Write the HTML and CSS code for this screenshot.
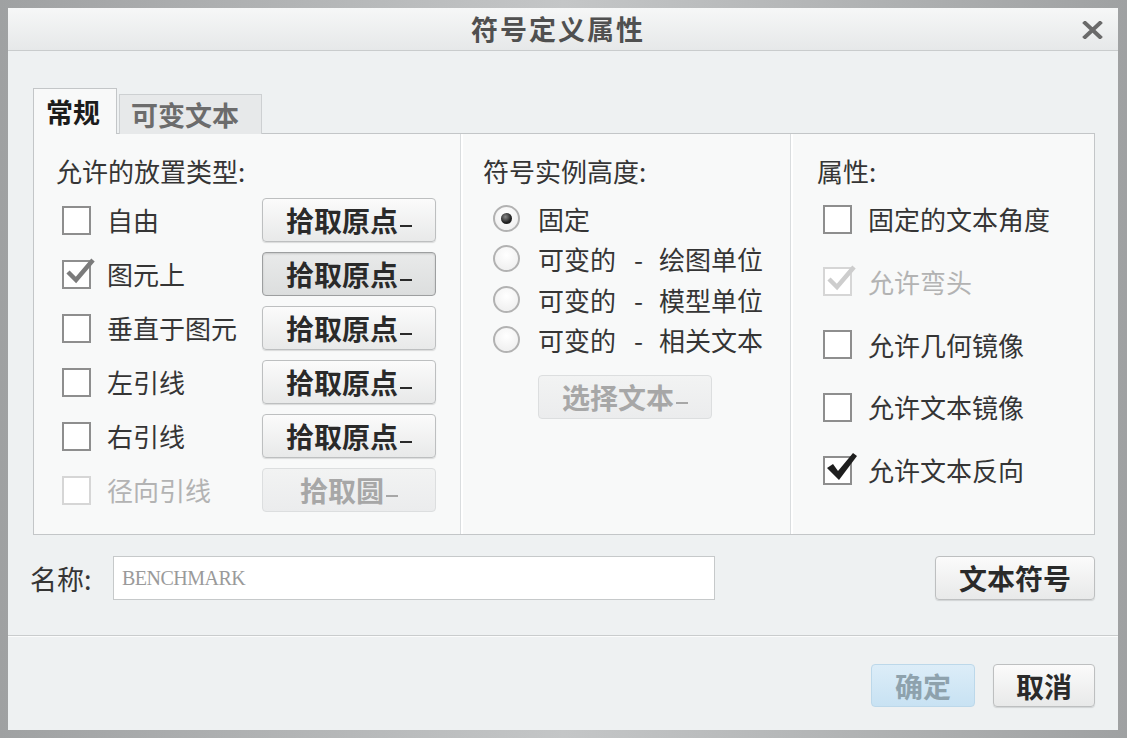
FILE: index.html
```html
<!DOCTYPE html>
<html lang="zh-CN">
  <head>
    <meta charset="UTF-8" />
    <title>符号定义属性</title>
    <link rel="stylesheet" href="styles.css">
  </head>
  <body>
    <div class="window">
      <div class="titlebar">
        <span class="title">符号定义属性</span>
        <span class="close">
          <svg width="21" height="18" viewBox="0 0 21 18">
            <path d="M3 2 L18 16 M18 2 L3 16" stroke="#6a6a6a" stroke-width="4" stroke-linecap="square" />
          </svg>
        </span>
      </div>

      <div class="content">
        <div class="tabs">
          <div class="tab active">常规</div>
          <div class="tab">可变文本</div>
        </div>

        <div class="panel">
          <!-- 放置类型 -->
          <div class="col col-place">
            <div class="group-label">允许的放置类型:</div>
            <div class="place-rows">
              <div class="place-row">
                <label class="check"><span class="box"></span>自由</label>
                <button class="btn">拾取原点<span class="mn"></span></button>
              </div>
              <div class="place-row">
                <label class="check">
                  <span class="box">
                    <svg class="tick gray" viewBox="0 0 34 34"><path d="M5 17 L13 25 L30 5" /></svg>
                  </span>图元上
                </label>
                <button class="btn pressed">拾取原点<span class="mn"></span></button>
              </div>
              <div class="place-row">
                <label class="check"><span class="box"></span>垂直于图元</label>
                <button class="btn">拾取原点<span class="mn"></span></button>
              </div>
              <div class="place-row">
                <label class="check"><span class="box"></span>左引线</label>
                <button class="btn">拾取原点<span class="mn"></span></button>
              </div>
              <div class="place-row">
                <label class="check"><span class="box"></span>右引线</label>
                <button class="btn">拾取原点<span class="mn"></span></button>
              </div>
              <div class="place-row">
                <label class="check disabled"><span class="box"></span>径向引线</label>
                <button class="btn disabled">拾取圆<span class="mn"></span></button>
              </div>
            </div>
          </div>

          <!-- 实例高度 -->
          <div class="col col-height">
            <div class="group-label">符号实例高度:</div>
            <div class="radio-rows">
              <label class="radio"><span class="dot on"></span>固定</label>
              <label class="radio"><span class="dot"></span>可变的<span class="dash">-</span>绘图单位</label>
              <label class="radio"><span class="dot"></span>可变的<span class="dash">-</span>模型单位</label>
              <label class="radio"><span class="dot"></span>可变的<span class="dash">-</span>相关文本</label>
            </div>
            <button class="btn disabled select-btn">选择文本<span class="mn"></span></button>
          </div>

          <!-- 属性 -->
          <div class="col col-props">
            <div class="group-label">属性:</div>
            <div class="prop-rows">
              <label class="check"><span class="box"></span>固定的文本角度</label>
              <label class="check disabled">
                <span class="box">
                  <svg class="tick light" viewBox="0 0 34 34"><path d="M5 17 L13 25 L30 5" /></svg>
                </span>允许弯头
              </label>
              <label class="check"><span class="box"></span>允许几何镜像</label>
              <label class="check"><span class="box"></span>允许文本镜像</label>
              <label class="check">
                <span class="box">
                  <svg class="tick dark" viewBox="0 0 34 34"><path d="M3 17 L9 13 L14 20 L29 2 L33 5 L15 29 Z" /></svg>
                </span>允许文本反向
              </label>
            </div>
          </div>
        </div>

        <div class="name-row">
          <span class="name-label">名称:</span>
          <input class="name-input" type="text" value="BENCHMARK" />
          <button class="btn sym-btn">文本符号</button>
        </div>
      </div>

      <div class="footer">
        <button class="btn ok-btn">确定</button>
        <button class="btn cancel-btn">取消</button>
      </div>
    </div>
  </body>
</html>
```

FILE: styles.css
```css
body {
  margin: 0;
  width: 1127px;
  height: 738px;
  background: linear-gradient(90deg, #9fa1a2, #c4c6c7 50%, #9fa1a2);
  font-family: "Noto Sans CJK SC", "Noto Sans", sans-serif;
  color: #353535;
  overflow: hidden;
}

.window {
  position: relative;
  margin: 8px 0 0 8px;
  width: 1110px;
  height: 722px;
  background: #eef1f2;
  display: flex;
  flex-direction: column;
  box-sizing: border-box;
}

/* Thanh tiêu đề */
.titlebar {
  height: 42px;
  border-bottom: 1px solid #c9cccd;
  background: linear-gradient(180deg, #f6f7f7, #e6e8e9);
  display: flex;
  align-items: center;
  justify-content: center;
}

.title {
  font-size: 27px;
  font-weight: 700;
  color: #505050;
  letter-spacing: 2px;
  line-height: 42px;
  margin-left: -10px;
}

.close {
  position: absolute;
  top: 12px;
  right: 15px;
  width: 21px;
  height: 18px;
}

.content {
  padding: 37px 23px 35px 25px;
  border-bottom: 1px solid #c9cccd;
}

/* Tabs */
.tabs {
  display: flex;
  align-items: flex-end;
  gap: 2px;
  margin-bottom: -1px;
  position: relative;
}

.tab {
  height: 39px;
  width: 120px;
  padding: 0 10px 0 11px;
  font-size: 27px;
  font-weight: 700;
  line-height: 40px;
  color: #6c6c6c;
  background: #e7e9ea;
  border: 1px solid #cdd0d2;
  border-bottom: none;
}

.tab.active {
  height: 45px;
  width: 58px;
  padding: 0 12px;
  color: #1c1c1c;
  line-height: 46px;
  background: #f8f9f9;
  border-color: #c3c6c8;
}

.panel {
  height: 400px;
  display: grid;
  grid-template-columns: 426px 330px 1fr;
  background: #f8f9f9;
  border: 1px solid #c3c6c8;
}

.col {
  padding-top: 22px;
  box-sizing: border-box;
}

.col-height,
.col-props {
  border-left: 1px solid #dadddf;
  box-shadow: inset 2px 0 0 #ffffff;
}

.group-label {
  font-size: 26px;
  line-height: 30px;
  margin-bottom: 12px;
}

/* Cột trái */
.col-place {
  padding-left: 22px;
  padding-right: 24px;
}

.place-rows {
  display: flex;
  flex-direction: column;
  gap: 10px;
  margin-left: 6px;
}

.place-row {
  display: grid;
  grid-template-columns: 1fr 174px;
  align-items: center;
  height: 44px;
}

.check {
  display: flex;
  align-items: center;
  gap: 16px;
  font-size: 26px;
  line-height: 30px;
  white-space: nowrap;
}

.check.disabled {
  color: #b3b3b3;
}

.box {
  position: relative;
  width: 29px;
  height: 29px;
  flex: none;
  box-sizing: border-box;
  border: 2px solid #8e8e8e;
  background: #ffffff;
}

.check.disabled .box {
  border-color: #d6d6d6;
}

.tick {
  position: absolute;
  left: -1px;
  top: -7px;
  width: 34px;
  height: 34px;
  overflow: visible;
}

.tick.gray path {
  fill: none;
  stroke: #7b7b7b;
  stroke-width: 4.5;
}

.tick.light path {
  fill: none;
  stroke: #cdcdcd;
  stroke-width: 4.5;
}

.tick.dark path {
  fill: #1e1e1e;
}

/* Nút */
.btn {
  height: 44px;
  box-sizing: border-box;
  border: 1px solid #bdbfc0;
  border-radius: 4px;
  background: linear-gradient(180deg, #fbfbfb, #e8e9e9);
  box-shadow: 0 1px 1px rgba(0, 0, 0, 0.12);
  font-family: "Noto Sans CJK SC", sans-serif;
  font-size: 28px;
  font-weight: 700;
  color: #2a2a2a;
  padding: 0;
  line-height: 40px;
}

.btn.pressed {
  border-color: #9d9fa0;
  background: linear-gradient(180deg, #e9eaea, #dcdede);
  box-shadow: inset 0 1px 2px rgba(0, 0, 0, 0.15);
}

.btn.disabled {
  color: #a7a7a7;
  border-color: #dcdedf;
  background: linear-gradient(180deg, #f2f3f3, #ebeced);
  box-shadow: none;
}

.mn {
  display: inline-block;
  width: 12px;
  height: 2px;
  margin-left: 2px;
  background: currentColor;
  vertical-align: 5px;
}

/* Cột giữa */
.col-height {
  padding-left: 22px;
}

.radio-rows {
  display: flex;
  flex-direction: column;
  margin-left: 10px;
}

.radio {
  display: flex;
  align-items: center;
  gap: 18px;
  height: 40.5px;
  font-size: 26px;
  white-space: nowrap;
}

.dash {
  margin: 0 -2px 0 0;
}

.dot {
  position: relative;
  width: 27px;
  height: 27px;
  flex: none;
  box-sizing: border-box;
  border-radius: 50%;
  border: 2px solid #b2b2b2;
  background: radial-gradient(circle at 50% 35%, #ffffff, #ececec);
}

.dot.on::after {
  content: "";
  position: absolute;
  left: 6px;
  top: 6px;
  width: 11px;
  height: 11px;
  border-radius: 50%;
  background: radial-gradient(circle at 40% 35%, #8a8a8a, #1f1f1f 60%);
}

.select-btn {
  width: 174px;
  margin: 15px 0 0 55px;
}

/* Cột phải */
.col-props {
  padding-left: 26px;
}

.prop-rows {
  display: flex;
  flex-direction: column;
  gap: 20.8px;
  margin-left: 6px;
}

.prop-rows .check {
  height: 42px;
}

/* Dòng tên */
.name-row {
  display: flex;
  align-items: center;
  margin-top: 21px;
}

.name-label {
  font-size: 27px;
  margin-left: -3px;
  width: 83px;
}

.name-input {
  width: 602px;
  height: 44px;
  box-sizing: border-box;
  border: 1px solid #c6c9ca;
  background: #ffffff;
  padding: 0 8px;
  font-family: "Liberation Serif", serif;
  font-size: 20px;
  color: #9a9a9a;
  letter-spacing: -0.5px;
  outline: none;
}

.sym-btn {
  margin-left: auto;
  width: 160px;
}

/* Chân */
.footer {
  flex: 1;
  display: flex;
  justify-content: flex-end;
  align-items: flex-start;
  gap: 18px;
  padding: 27px 23px 0 0;
  background: #eef1f2;
  border-top: 1px solid #fbfcfc;
}

.ok-btn {
  width: 104px;
  height: 43px;
  color: #8ea2ad;
  border-color: #bcd8ea;
  background: linear-gradient(180deg, #dcedf8, #c8e2f3);
  box-shadow: none;
}

.cancel-btn {
  width: 102px;
  height: 43px;
}
```
